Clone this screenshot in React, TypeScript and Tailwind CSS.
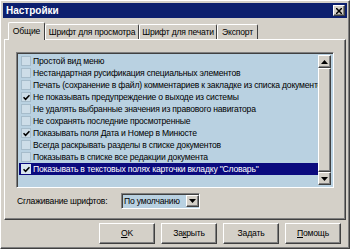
import { ReactNode } from 'react'

interface Option {
  label: string
  checked?: boolean
  selected?: boolean
}

const options: Option[] = [
  { label: 'Простой вид меню' },
  { label: 'Нестандартная русификация специальных элементов' },
  { label: 'Печать (сохранение в файл) комментариев к закладке из списка документов' },
  { label: 'Не показывать предупреждение о выходе из системы', checked: true },
  { label: 'Не удалять выбранные значения из правового навигатора' },
  { label: 'Не сохранять последние просмотренные' },
  { label: 'Показывать поля Дата и Номер в Минюсте', checked: true },
  { label: 'Всегда раскрывать разделы в списке документов' },
  { label: 'Показывать в списке все редакции документа' },
  { label: 'Показывать в текстовых полях карточки вкладку "Словарь"', checked: true, selected: true },
]

const tabs = [
  { label: 'Шрифт для просмотра', w: 'w-[94px]' },
  { label: 'Шрифт для печати', w: 'w-[78px]' },
  { label: 'Экспорт', w: 'w-[41px]' },
]

const raised =
  'border border-t-white border-l-white border-b-[#404040] border-r-[#404040] shadow-[inset_-1px_-1px_0_#808080]'
const sunken =
  'border border-t-[#808080] border-l-[#808080] border-b-white border-r-white shadow-[inset_1px_1px_0_#404040]'

function Arrow({ up }: { up?: boolean }) {
  return (
    <svg width="7" height="4" viewBox="0 0 7 4">
      <path d={up ? 'M0 4 L3.5 0 L7 4 Z' : 'M0 0 L7 0 L3.5 4 Z'} fill="#000" />
    </svg>
  )
}

function Check() {
  return (
    <svg width="7" height="7" viewBox="0 0 7 7">
      <path d="M0.5 3.2 L2.6 5.3 L6.5 1.2" stroke="#000" strokeWidth="1.6" fill="none" />
    </svg>
  )
}

function Button({ children }: { children: ReactNode }) {
  return (
    <div className={`w-[56px] h-[21px] flex items-center justify-center bg-[#d4d0c8] ${raised}`}>
      {children}
    </div>
  )
}

export default function App() {
  return (
    <div
      className={`w-[350px] h-[249px] bg-[#d4d0c8] flex flex-col p-[2px] text-[8.6px] tracking-[-0.2px] text-black ${raised}`}
      style={{ fontFamily: '"Liberation Sans", Arial, sans-serif' }}
    >
      {/* Title bar */}
      <div className="h-[15px] bg-[#0c1f6e] flex items-center justify-between pl-[3px] pr-[2px] shrink-0">
        <span className="text-white font-bold text-[10px] tracking-normal leading-none">Настройки</span>
        <div className={`w-[12px] h-[11px] bg-[#d4d0c8] flex items-center justify-center ${raised}`}>
          <svg width="6" height="6" viewBox="0 0 6 6">
            <path d="M0 0 L6 6 M6 0 L0 6" stroke="#000" strokeWidth="1.5" />
          </svg>
        </div>
      </div>

      {/* Tabs */}
      <div className="flex items-end pl-[5px] mt-[3px] h-[18px] shrink-0">
        <div className="w-[37px] h-[18px] flex items-center justify-center bg-[#d4d0c8] border-t border-l border-white border-r border-r-[#404040] rounded-t-[2px] relative z-10 -mb-[1px]">
          Общие
        </div>
        {tabs.map((t) => (
          <div
            key={t.label}
            className={`${t.w} h-[15px] flex items-center justify-center border-t border-l border-white border-r border-r-[#404040] rounded-t-[2px]`}
          >
            {t.label}
          </div>
        ))}
      </div>

      {/* Panel */}
      <div className={`mx-[1px] h-[181px] flex flex-col pl-[11px] pr-[11px] pt-[12px] shrink-0 ${raised}`}>
        <div className={`h-[136px] bg-[#b9d1e1] flex p-[2px] ${sunken}`}>
          <div className="flex-1 flex flex-col min-w-0">
            {options.map((o) => (
              <div
                key={o.label}
                className={`h-[12px] flex items-center gap-[2px] pl-[2px] whitespace-nowrap overflow-hidden ${
                  o.selected ? 'bg-[#0a0a7e] text-white' : ''
                }`}
              >
                <span
                  className={`w-[10px] h-[10px] shrink-0 flex items-center justify-center border ${
                    o.selected ? 'bg-[#d8e6ef] border-[#d8e6ef]' : 'bg-[#cddde8] border-[#a6bccb]'
                  }`}
                >
                  {o.checked && <Check />}
                </span>
                <span>{o.label}</span>
              </div>
            ))}
          </div>
          {/* Scrollbar */}
          <div className="w-[13px] flex flex-col bg-[#e6e3de]">
            <div className={`h-[13px] bg-[#d4d0c8] flex items-center justify-center ${raised}`}>
              <Arrow up />
            </div>
            <div className={`flex-1 bg-[#d4d0c8] ${raised}`} />
            <div className={`h-[13px] bg-[#d4d0c8] flex items-center justify-center ${raised}`}>
              <Arrow />
            </div>
          </div>
        </div>

        {/* Font smoothing */}
        <div className="flex items-center mt-[5px] pl-[1px]">
          <span className="w-[104px]">Сглаживание шрифтов:</span>
          <div className={`w-[79px] h-[16px] bg-[#b9d1e1] flex items-center pl-[2px] ${sunken}`}>
            <span className="flex-1">По умолчанию</span>
            <div className={`w-[13px] h-[12px] bg-[#d4d0c8] flex items-center justify-center ${raised}`}>
              <Arrow />
            </div>
          </div>
        </div>
      </div>

      {/* Buttons */}
      <div className="flex justify-end gap-[6px] mt-[3px] pr-[6px]">
        <Button>
          <span className="underline">O</span>K
        </Button>
        <Button>
          За<span className="underline">к</span>рыть
        </Button>
        <Button>
          За<span className="underline">д</span>ать
        </Button>
        <Button>
          <span className="underline">П</span>омощь
        </Button>
      </div>
    </div>
  )
}
